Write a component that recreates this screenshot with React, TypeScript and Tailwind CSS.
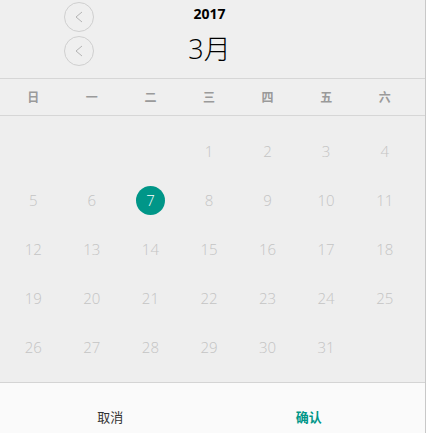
import React from "react";

const weekdays = ["日", "一", "二", "三", "四", "五", "六"];

// March 2017 starts on Wednesday
const cells: (number | null)[] = [
  null, null, null,
  ...Array.from({ length: 31 }, (_, i) => i + 1),
];
while (cells.length < 35) cells.push(null);

const font = { fontFamily: '"Open Sans", "Noto Sans CJK SC", sans-serif' };

function ArrowButton() {
  return (
    <button className="w-[30px] h-[30px] rounded-full border border-[#cfcfcf] flex items-center justify-center">
      <svg width="10" height="12" viewBox="0 0 10 12" fill="none">
        <path d="M8 1 L2 6 L8 11" stroke="#b4b4b4" strokeWidth="1" />
      </svg>
    </button>
  );
}

export default function App() {
  const selected = 7;

  return (
    <div
      className="w-[426px] h-[433px] overflow-hidden bg-[#efefef] border-r border-[#c8c8c8] flex flex-col"
      style={font}
    >
      {/* header */}
      <div className="h-[79px] shrink-0 relative border-b border-[#d6d6d6]">
        <div className="flex flex-col gap-[4px] pl-[64px] pt-[2px]">
          <ArrowButton />
          <ArrowButton />
        </div>
        <div className="absolute left-0 right-[6px] top-0 flex flex-col items-center">
          <div className="mt-[5px] text-[14px] leading-[18px] font-bold text-black">2017</div>
          <div className="mt-[10px] text-[27px] leading-[32px] font-light text-black">3月</div>
        </div>
      </div>

      {/* weekdays */}
      <div className="h-[37px] shrink-0 border-b border-[#d6d6d6]">
        <div className="h-full grid grid-cols-7 pl-[4px] w-[414px] items-center">
          {weekdays.map((d) => (
            <div key={d} className="text-center text-[12px] font-bold text-[#9a9a9a] pt-[1px]">
              {d}
            </div>
          ))}
        </div>
      </div>

      {/* days */}
      <div className="flex-1 bg-[#eeeeee] pt-[11px] border-b border-[#d4d4d4]">
        <div className="grid grid-cols-7 pl-[4px] w-[414px]">
          {cells.map((n, i) => (
            <div key={i} className="h-[49px] flex items-center justify-center">
              {n === selected ? (
                <div className="w-[29px] h-[29px] rounded-full bg-[#009688] text-white flex items-center justify-center text-[15px] font-light">
                  {n}
                </div>
              ) : (
                <span className="text-[15px] font-light text-[#c4c4c4]">{n ?? ""}</span>
              )}
            </div>
          ))}
        </div>
      </div>

      {/* footer */}
      <div className="h-[50px] shrink-0 bg-[#fafafa] grid grid-cols-2 items-center pt-[20px]">
        <button className="text-center text-[13px] text-[#333333] pl-[8px]">取消</button>
        <button className="text-center text-[13px] font-bold text-[#009688] pr-[20px]">确认</button>
      </div>
    </div>
  );
}
